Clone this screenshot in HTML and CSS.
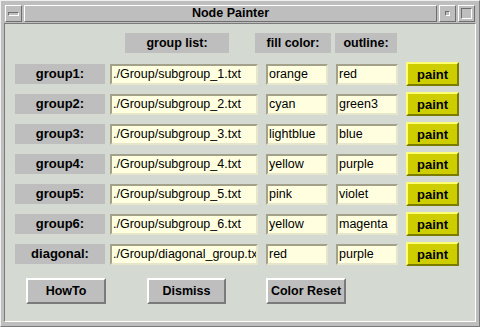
FILE: index.html
```html
<!DOCTYPE html>
<html lang="en">
<head>
  <meta charset="UTF-8" />
  <title>Node Painter</title>
  <link rel="stylesheet" href="styles.css">
</head>
<body>

<div class="frame">
  <!-- Title bar -->
  <div class="titlebar">
    <div class="wbtn menu"><span class="menu-icon"></span></div>
    <div class="title">Node Painter</div>
    <div class="wbtn"><span class="min-icon"></span></div>
    <div class="wbtn"><span class="max-icon"></span></div>
  </div>

  <!-- Content -->
  <div class="content">
    <div class="header">
      <div class="head head-list">group list:</div>
      <div class="head head-fill">fill color:</div>
      <div class="head head-outline">outline:</div>
    </div>

    <div class="rows">
      <div class="row">
        <div class="label">group1:</div>
        <div class="entry file">./Group/subgroup_1.txt</div>
        <div class="entry color">orange</div>
        <div class="entry color">red</div>
        <button class="paint">paint</button>
      </div>
      <div class="row">
        <div class="label">group2:</div>
        <div class="entry file">./Group/subgroup_2.txt</div>
        <div class="entry color">cyan</div>
        <div class="entry color">green3</div>
        <button class="paint">paint</button>
      </div>
      <div class="row">
        <div class="label">group3:</div>
        <div class="entry file">./Group/subgroup_3.txt</div>
        <div class="entry color">lightblue</div>
        <div class="entry color">blue</div>
        <button class="paint">paint</button>
      </div>
      <div class="row">
        <div class="label">group4:</div>
        <div class="entry file">./Group/subgroup_4.txt</div>
        <div class="entry color">yellow</div>
        <div class="entry color">purple</div>
        <button class="paint">paint</button>
      </div>
      <div class="row">
        <div class="label">group5:</div>
        <div class="entry file">./Group/subgroup_5.txt</div>
        <div class="entry color">pink</div>
        <div class="entry color">violet</div>
        <button class="paint">paint</button>
      </div>
      <div class="row">
        <div class="label">group6:</div>
        <div class="entry file">./Group/subgroup_6.txt</div>
        <div class="entry color">yellow</div>
        <div class="entry color">magenta</div>
        <button class="paint">paint</button>
      </div>
      <div class="row">
        <div class="label">diagonal:</div>
        <div class="entry file">./Group/diagonal_group.txt</div>
        <div class="entry color">red</div>
        <div class="entry color">purple</div>
        <button class="paint">paint</button>
      </div>
    </div>

    <div class="actions">
      <button class="btn btn-howto">HowTo</button>
      <button class="btn btn-dismiss">Dismiss</button>
      <button class="btn btn-reset">Color Reset</button>
    </div>
  </div>
</div>

</body>
</html>
```

FILE: styles.css
```css
* {
  margin: 0;
  padding: 0;
  box-sizing: border-box;
}

body {
  font-family: "Liberation Sans", Arial, sans-serif;
  background-color: #bebebe;
  width: 480px;
  height: 327px;
  overflow: hidden;
}

.frame {
  width: 480px;
  height: 327px;
  background-color: #bebebe;
  border: 1px solid #7a7a7a;
  border-top-color: #f0f0f0;
  border-left-color: #f0f0f0;
  padding: 4px 3px 4px 3px;
  display: flex;
  flex-direction: column;
}

.titlebar {
  display: flex;
  height: 17px;
  gap: 2px;
  padding: 0 1px;
}

.wbtn {
  width: 17px;
  height: 17px;
  background-color: #bebebe;
  border: 1px solid #6e6e6e;
  border-top-color: #fff;
  border-left-color: #fff;
  display: flex;
  align-items: center;
  justify-content: center;
}

.menu-icon {
  width: 11px;
  height: 4px;
  border: 1px solid #fff;
  border-top-color: #6e6e6e;
  border-left-color: #6e6e6e;
}

.min-icon {
  width: 5px;
  height: 5px;
  border: 1px solid #fff;
  border-top-color: #6e6e6e;
  border-left-color: #6e6e6e;
}

.max-icon {
  width: 11px;
  height: 11px;
  border: 1px solid #fff;
  border-top-color: #6e6e6e;
  border-left-color: #6e6e6e;
}

.title {
  flex: 1;
  height: 17px;
  background-color: #bebebe;
  border: 1px solid #6e6e6e;
  border-top-color: #fff;
  border-left-color: #fff;
  text-align: center;
  font-weight: bold;
  font-size: 12.5px;
  line-height: 15px;
  color: #000;
}

.content {
  flex: 1;
  margin-top: 1px;
  background-color: #d4d9d2;
  border: 1px solid #fff;
  border-top-color: #7a7a7a;
  border-left-color: #7a7a7a;
}

.header {
  display: flex;
  margin-top: 9px;
  padding-left: 120px;
  height: 20px;
}

.head {
  background-color: #bebebe;
  font-weight: bold;
  font-size: 12.5px;
  line-height: 20px;
  text-align: center;
  color: #000;
}

.head-list {
  width: 104px;
}

.head-fill {
  width: 76px;
  margin-left: 26px;
}

.head-outline {
  width: 62px;
  margin-left: 4px;
}

.rows {
  display: flex;
  flex-direction: column;
  gap: 6px;
  margin-top: 9px;
}

.row {
  display: flex;
  align-items: center;
  height: 24px;
  padding-left: 10px;
}

.label {
  width: 90px;
  height: 20px;
  background-color: #bebebe;
  font-weight: bold;
  font-size: 13px;
  line-height: 20px;
  text-align: center;
  color: #000;
}

.entry {
  height: 21px;
  background-color: #ffffe0;
  border: 2px solid #e6e6cc;
  border-top-color: #a3a18a;
  border-left-color: #a3a18a;
  font-size: 12.5px;
  line-height: 17px;
  padding-left: 1px;
  color: #000;
  white-space: nowrap;
  overflow: hidden;
}

.file {
  width: 148px;
  margin-left: 5px;
}

.color {
  width: 62px;
  margin-left: 8px;
}

.paint {
  width: 53px;
  height: 24px;
  margin-left: 8px;
  background-color: #cdcd00;
  border: 2px solid #7b7b00;
  border-top-color: #ffff73;
  border-left-color: #ffff73;
  font-family: "Liberation Sans", Arial, sans-serif;
  font-weight: bold;
  font-size: 13px;
  color: #000;
}

.actions {
  display: flex;
  margin-top: 12px;
  padding-left: 21px;
}

.btn {
  width: 80px;
  height: 26px;
  background-color: #bebebe;
  border: 2px solid #7a7a7a;
  border-top-color: #fff;
  border-left-color: #fff;
  font-family: "Liberation Sans", Arial, sans-serif;
  font-weight: bold;
  font-size: 12.5px;
  color: #000;
}

.btn-dismiss {
  width: 79px;
  margin-left: 41px;
}

.btn-reset {
  margin-left: 40px;
}
```
